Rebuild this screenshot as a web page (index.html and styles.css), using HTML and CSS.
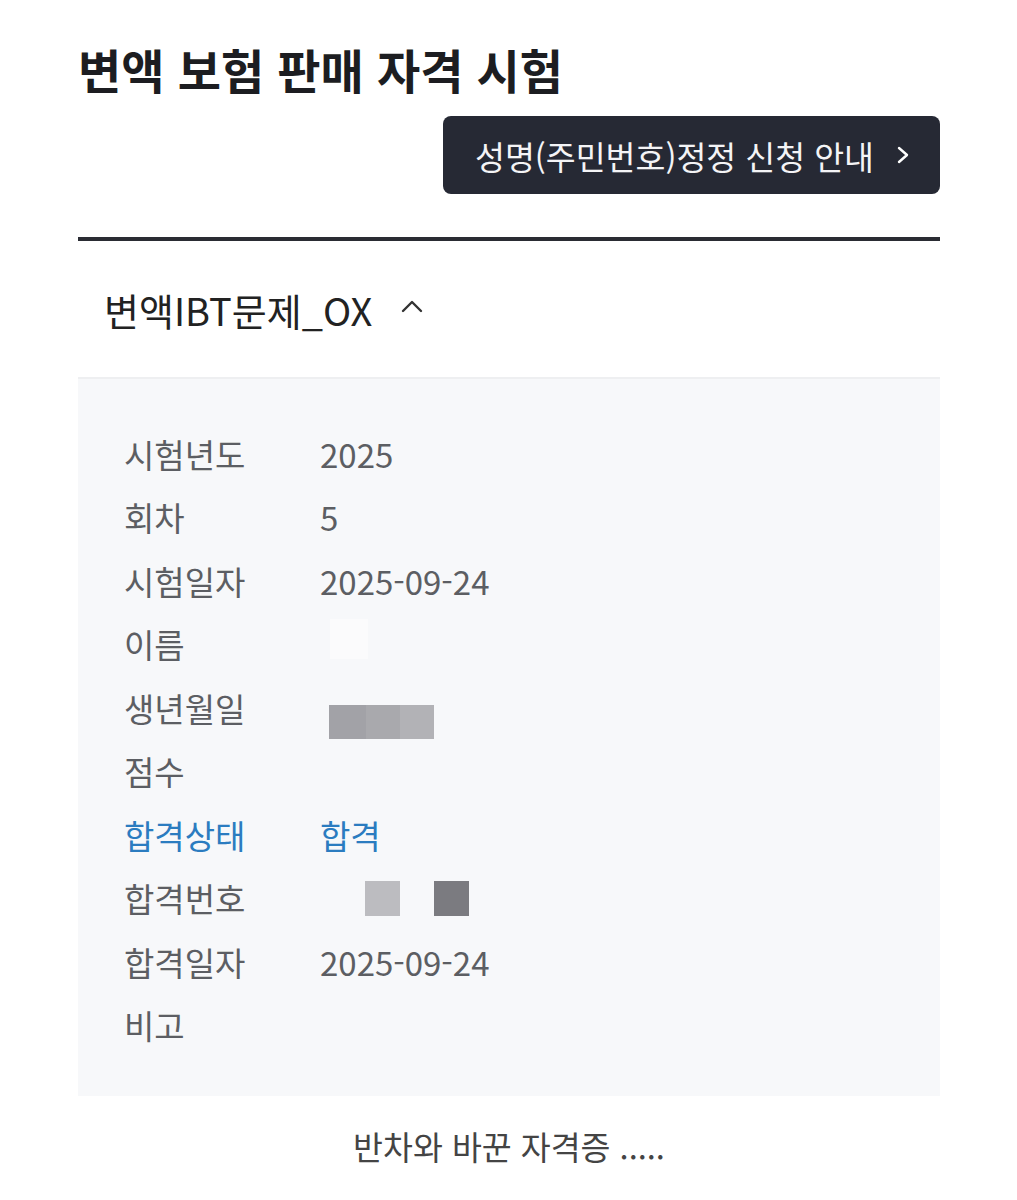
FILE: index.html
```html
<!DOCTYPE html>
<html lang="ko">
<head>
<meta charset="utf-8">
<title>변액 보험 판매 자격 시험</title>
<link rel="stylesheet" href="styles.css">
</head>
<body>
<main class="page">
  <h1 class="title">변액 보험 판매 자격 시험</h1>
  <div class="actions">
    <a class="btn-guide" href="#">성명(주민번호)정정 신청 안내
      <svg class="btn-arrow" width="14" height="18" viewBox="0 0 14 18"><path d="M3 2 L11 9 L3 16" fill="none" stroke="#fff" stroke-width="2.4" stroke-linecap="round" stroke-linejoin="round"/></svg>
    </a>
  </div>
  <section class="accordion">
    <div class="acc-head">
      <span class="acc-title">변액IBT문제_OX</span>
      <svg class="acc-caret" width="24" height="16" viewBox="0 0 24 16"><path d="M3 13 L12 4 L21 13" fill="none" stroke="#333" stroke-width="2.4" stroke-linecap="round" stroke-linejoin="round"/></svg>
    </div>
    <dl class="acc-body">
      <div class="row"><dt>시험년도</dt><dd>2025</dd></div>
      <div class="row"><dt>회차</dt><dd>5</dd></div>
      <div class="row"><dt>시험일자</dt><dd>2025-09-24</dd></div>
      <div class="row"><dt>이름</dt><dd><span class="mask mask-name"></span></dd></div>
      <div class="row"><dt>생년월일</dt><dd><span class="mask mask-birth"></span></dd></div>
      <div class="row"><dt>점수</dt><dd></dd></div>
      <div class="row row-pass"><dt>합격상태</dt><dd>합격</dd></div>
      <div class="row"><dt>합격번호</dt><dd><span class="mask mask-n1"></span><span class="mask mask-n2"></span></dd></div>
      <div class="row"><dt>합격일자</dt><dd>2025-09-24</dd></div>
      <div class="row"><dt>비고</dt><dd></dd></div>
    </dl>
  </section>
  <p class="caption">반차와 바꾼 자격증 .....</p>
</main>
</body>
</html>
```
FILE: styles.css
```css
* { box-sizing: border-box; }
html, body {
  margin: 0;
  padding: 0;
  background: #ffffff;
}
body {
  font-family: "Noto Sans CJK KR", "Noto Sans", sans-serif;
  color: #222;
}
.page {
  width: 862px;
  margin-left: 78px;
  padding-top: 36px;
}
.title {
  margin: 0;
  font-size: 47px;
  font-weight: 700;
  line-height: 66px;
  color: #1c1d21;
}
.actions {
  display: flex;
  justify-content: flex-end;
  margin-top: 14px;
}
.btn-guide {
  display: flex;
  align-items: center;
  gap: 22px;
  height: 78px;
  padding: 0 30px 0 32px;
  background: #262934;
  border-radius: 8px;
  color: #f4f4f6;
  text-decoration: none;
  font-size: 32.5px;
}
.btn-arrow { display: block; }
.accordion {
  margin-top: 43px;
  border-top: 4px solid #2a2c33;
}
.acc-head {
  display: flex;
  align-items: center;
  gap: 28px;
  height: 138px;
  padding-left: 26px;
  border-bottom: 2px solid #eeeff1;
}
.acc-title {
  font-size: 38px;
  color: #222;
}
.acc-caret { display: block; margin-top: -6px; }
.acc-body {
  margin: 0;
  background: #f7f8fa;
  padding: 43px 0 39px 46px;
}
.row {
  display: grid;
  grid-template-columns: 196px 1fr;
  height: 63.5px;
  align-items: center;
  font-size: 33px;
  color: #5c5e63;
}
.row dt, .row dd { margin: 0; }
.row dd { display: flex; align-items: center; }
.row-pass { color: #2b7cc0; }
.mask { display: inline-block; height: 35px; }
.mask-name { width: 38px; height: 40px; background: #fbfbfc; margin-left: 10px; margin-top: -10px; }
.mask-birth { width: 105px; height: 34px; margin-left: 9px; margin-top: 28px; background: linear-gradient(90deg, #a2a2a7 0%, #a2a2a7 35%, #a9a9ad 35%, #a9a9ad 68%, #b2b2b6 68%); }
.mask-n1 { width: 35px; margin-left: 45px; background: #bcbcc0; }
.mask-n2 { width: 35px; margin-left: 34px; background: #7b7b80; }
.caption {
  margin: 26px 0 0;
  text-align: center;
  font-size: 32.5px;
  color: #444;
}
```
